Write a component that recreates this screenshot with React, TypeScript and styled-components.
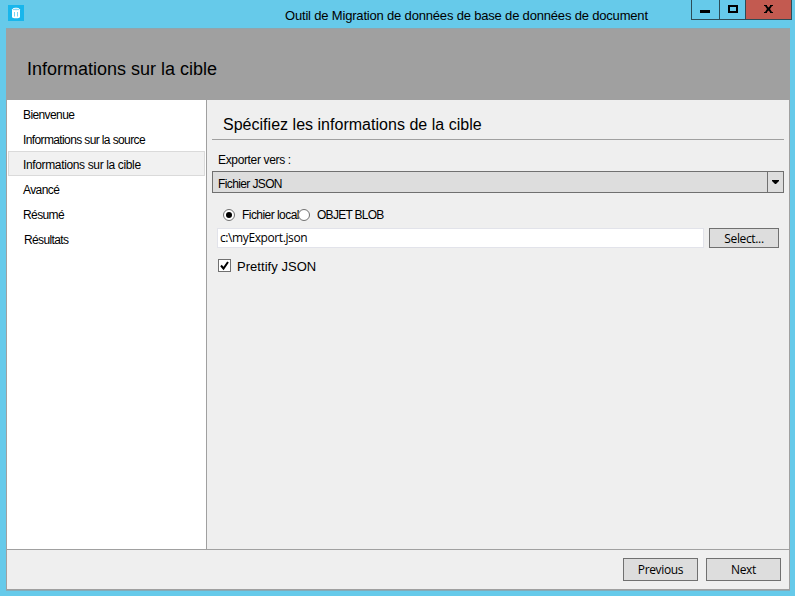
import React from "react";
import styled, { createGlobalStyle } from "styled-components";

const GlobalStyle = createGlobalStyle`
  * { box-sizing: border-box; }
  body { margin: 0; overflow: hidden; }
`;

const Window = styled.div`
  width: 795px;
  height: 596px;
  display: flex;
  flex-direction: column;
  background: #66caea;
  color: #000;
  font-family: "Liberation Sans", Arial, sans-serif;
  font-size: 12px;
  padding: 0 5px 5px 6px;
`;

const Label = styled.span<{ $size?: number; $spacing?: number; $ui?: boolean }>`
  font-family: ${(p) => (p.$ui ? '"Open Sans", "Noto Sans", sans-serif' : "inherit")};
  font-size: ${(p) => p.$size ?? 12}px;
  letter-spacing: ${(p) => p.$spacing ?? 0}px;
  line-height: 16px;
  white-space: pre;
`;

const TitleBar = styled.header`
  height: 28px;
  flex: none;
  display: flex;
  align-items: flex-start;
`;

const AppIcon = styled.svg`
  width: 16px;
  height: 16px;
  margin: 5px 0 0 2px;
`;

const WindowTitle = styled.div`
  flex: 1;
  padding: 8px 0 0 261px;
  display: flex;
`;

const Controls = styled.div`
  display: flex;
  height: 20px;
  width: 101px;
  margin-right: -2px;
  border: 1px solid #2c4c57;
  border-top: 0;
`;

const ControlButton = styled.button<{ $width: number; $close?: boolean }>`
  width: ${(p) => p.$width}px;
  height: 19px;
  padding: 0;
  border: 0;
  border-right: ${(p) => (p.$close ? "0" : "1px solid #2c4c57")};
  background: ${(p) => (p.$close ? "#c35a50" : "transparent")};
  svg { display: block; }
`;

const Client = styled.main`
  width: 784px;
  height: 562px;
  display: flex;
  flex-direction: column;
  border: 1px solid #a0a0a0;
  border-top-color: #8fa5ad;
  background: #efefef;
  box-shadow: 0 1px 0 #84abb8;
`;

const Banner = styled.div`
  height: 71px;
  flex: none;
  background: #a0a0a0;
  padding: 32px 0 0 20px;
  display: flex;
`;

const Body = styled.div`
  height: 449px;
  flex: none;
  display: flex;
`;

const Sidebar = styled.nav`
  width: 200px;
  flex: none;
  background: #fff;
  border-right: 1px solid #a0a0a0;
  padding: 1px 1px 0;
`;

const Step = styled.div<{ $active?: boolean; $shift?: number }>`
  height: 25px;
  display: flex;
  align-items: center;
  padding: 2px 0 0 ${(p) => 14 + (p.$shift ?? 0)}px;
  border: 1px solid ${(p) => (p.$active ? "#dadada" : "transparent")};
  background: ${(p) => (p.$active ? "#f1f1f1" : "transparent")};
`;

const Panel = styled.section`
  flex: 1;
  padding: 0 5px;
  display: flex;
  flex-direction: column;
`;

const PanelTitle = styled.div`
  height: 40px;
  flex: none;
  border-bottom: 1px solid #a0a0a0;
  padding: 17px 0 0 11px;
  display: flex;
`;

const FieldLabel = styled.div`
  height: 31px;
  display: flex;
  padding: 12px 0 0 6px;
`;

const Combo = styled.div`
  height: 22px;
  display: flex;
  border: 1px solid #707070;
  background: #dddddd;
`;

const ComboValue = styled.div`
  flex: 1;
  display: flex;
  padding: 4px 0 0 5px;
`;

const ComboArrow = styled.div`
  width: 16px;
  border-left: 1px solid #707070;
  svg { display: block; }
`;

const Radios = styled.div`
  display: flex;
  height: 35px;
  padding: 14px 0 0 11px;
`;

const Radio = styled.label<{ $width: number }>`
  display: flex;
  width: ${(p) => p.$width}px;
  gap: 7px;
  white-space: nowrap;
`;

const RadioMark = styled.svg`
  width: 12px;
  height: 12px;
  flex: none;
  margin-top: 2px;
`;

const PathRow = styled.div`
  display: flex;
  gap: 5px;
  padding: 0 5px;
  height: 20px;
`;

const PathInput = styled.div`
  width: 487px;
  height: 20px;
  background: #fff;
  border: 1px solid #e2e3ea;
  padding: 1px 0 0 2px;
  display: flex;
`;

const Button = styled.button<{ $width: number; $height: number; $drop?: number }>`
  width: ${(p) => p.$width}px;
  height: ${(p) => p.$height}px;
  padding: ${(p) => p.$drop ?? 0}px 0 0;
  color: #000;
  background: #dddddd;
  border: 1px solid #707070;
  display: flex;
  align-items: center;
  justify-content: center;
`;

const CheckRow = styled.label`
  display: flex;
  gap: 6px;
  padding: 11px 0 0 6px;
`;

const CheckMark = styled.svg`
  width: 13px;
  height: 13px;
`;

const Footer = styled.footer`
  flex: 1;
  border-top: 1px solid #a0a0a0;
  display: flex;
  justify-content: flex-end;
  gap: 8px;
  padding: 8px 8px 0 0;
`;

const steps = [
  { text: "Bienvenue", spacing: -0.6 },
  { text: "Informations sur la source", spacing: -0.62 },
  { text: "Informations sur la cible", spacing: -0.36, active: true },
  { text: "Avancé", spacing: -0.6 },
  { text: "Résumé", spacing: -0.6 },
  { text: "Résultats", spacing: -0.62, shift: 1 },
];

export default function App() {
  return (
    <>
      <GlobalStyle />
      <Window>
        <TitleBar>
          <AppIcon viewBox="0 0 16 16">
            <rect width="16" height="16" fill="#18b6ec" />
            <path d="M4 4.500V12c0 .8 1.800 1.300 4 1.300s4-.500 4-1.300V4.500z" fill="#fff" />
            <ellipse cx="8" cy="4.500" rx="3.600" ry="1.300" fill="#8fdaf5" stroke="#fff" />
            <path d="M6.500 7v4.500M9.500 7v4.500" stroke="#75d3f2" fill="none" />
          </AppIcon>
          <WindowTitle>
            <Label $size={13} $spacing={-0.18}>Outil de Migration de données de base de données de document</Label>
          </WindowTitle>
          <Controls>
            <ControlButton $width={28} aria-label="Minimize">
              <svg width="27" height="19"><rect x="8" y="10" width="10" height="3" /></svg>
            </ControlButton>
            <ControlButton $width={26} aria-label="Maximize">
              <svg width="25" height="19"><rect x="9" y="6" width="8" height="6" fill="none" stroke="#000" strokeWidth="2" /></svg>
            </ControlButton>
            <ControlButton $width={45} $close aria-label="Close">
              <svg width="45" height="19"><path d="M18 5h3v1l1.500 1.500L24 6V5h3v1h-1l-2 3 2 3h1v1h-3v-1l-1.500-1.500L21 12v1h-3v-1h1l2-3-2-3h-1z" /></svg>
            </ControlButton>
          </Controls>
        </TitleBar>
        <Client>
          <Banner><Label $size={18}>Informations sur la cible</Label></Banner>
          <Body>
            <Sidebar>
              {steps.map((s) => (
                <Step key={s.text} $active={s.active} $shift={s.shift}>
                  <Label $spacing={s.spacing}>{s.text}</Label>
                </Step>
              ))}
            </Sidebar>
            <Panel>
              <PanelTitle><Label $size={16} $spacing={0.02}>Spécifiez les informations de la cible</Label></PanelTitle>
              <FieldLabel><Label $spacing={-0.35}>Exporter vers :</Label></FieldLabel>
              <Combo>
                <ComboValue><Label $spacing={-0.62}>Fichier JSON</Label></ComboValue>
                <ComboArrow>
                  <svg width="15" height="20"><path d="M4 8h7v1l-3 3H7L4 9z" /></svg>
                </ComboArrow>
              </Combo>
              <Radios>
                <Radio $width={75}>
                  <RadioMark viewBox="0 0 12 12">
                    <circle cx="6" cy="6" r="5.500" fill="#fff" stroke="#707070" />
                    <circle cx="6" cy="6" r="3" />
                  </RadioMark>
                  <Label $spacing={-0.55}>Fichier local</Label>
                </Radio>
                <Radio $width={90}>
                  <RadioMark viewBox="0 0 12 12">
                    <circle cx="6" cy="6" r="5.500" fill="#fff" stroke="#707070" />
                  </RadioMark>
                  <Label $spacing={-0.72}>OBJET BLOB</Label>
                </Radio>
              </Radios>
              <PathRow>
                <PathInput><Label $ui $spacing={-0.4}>c:\myExport.json</Label></PathInput>
                <Button $width={70} $height={20} $drop={2}><Label $ui $spacing={-0.35}>Select...</Label></Button>
              </PathRow>
              <CheckRow>
                <CheckMark viewBox="0 0 13 13">
                  <rect x=".5" y=".5" width="12" height="12" fill="#fff" stroke="#707070" />
                  <path d="M3 6.500l2.500 3L10 3" fill="none" stroke="#000" strokeWidth="2" />
                </CheckMark>
                <Label $size={13} $spacing={0.04}>Prettify JSON</Label>
              </CheckRow>
            </Panel>
          </Body>
          <Footer>
            <Button $width={75} $height={23}><Label $ui $spacing={-0.35}>Previous</Label></Button>
            <Button $width={75} $height={23}><Label $ui $spacing={-0.35}>Next</Label></Button>
          </Footer>
        </Client>
      </Window>
    </>
  );
}
